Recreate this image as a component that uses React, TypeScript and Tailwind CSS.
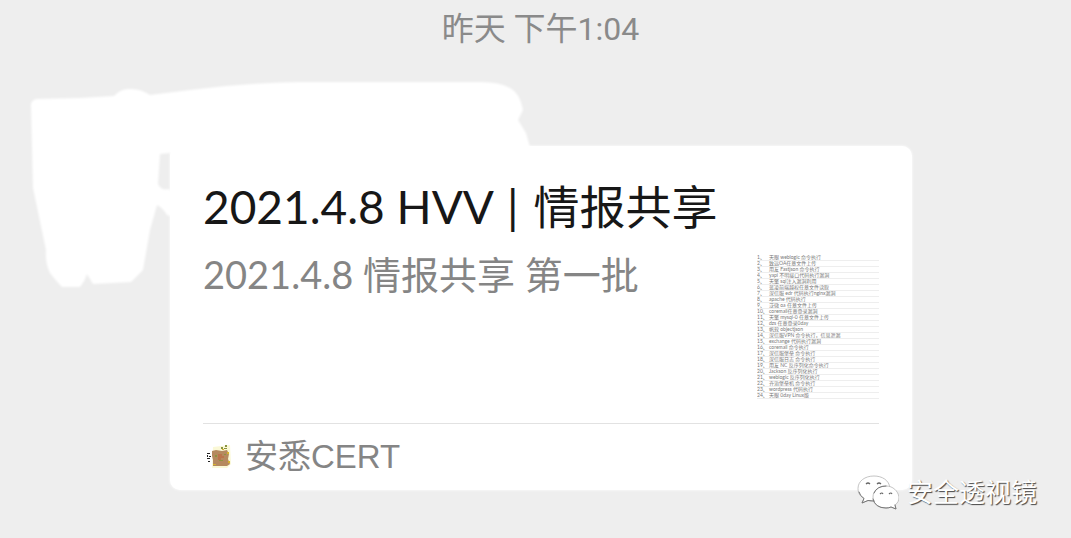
const rows: string[] = [
  "天眼 weblogic 命令执行",
  "致远OA任意文件上传",
  "用友 Fastjson 命令执行",
  "yapi 不明接口代码执行漏洞",
  "天擎 sql注入漏洞利用",
  "蓝凌前端越权任意文件读取",
  "深信服 edr 代码执行nginx漏洞",
  "apache 代码执行",
  "泛微 oa 任意文件上传",
  "coremail任意登录漏洞",
  "天擎 mysql-0 任意文件上传",
  "dzs 任意登录0day",
  "帆软 objectjson",
  "深信服VPN 命令执行，信息泄漏",
  "exchange 代码执行漏洞",
  "coremail 命令执行",
  "深信服堡垒 命令执行",
  "深信服日志 命令执行",
  "用友 NC 反序列化命令执行",
  "Jackson 反序列化执行",
  "weblogic 反序列化执行",
  "齐治堡垒机 命令执行",
  "wordpress 代码执行",
  "天眼 0day Linux版",
];

function Scribble() {
  return (
    <svg
      aria-hidden="true"
      viewBox="0 0 560 230"
      className="pointer-events-none absolute top-[70px] left-0 h-[230px] w-[560px] blur-[1px]"
    >
      <path
        fill="#fff"
        d="M36 29Q30 31 31 37L33 118L46 180Q45 193 50 203Q57 212 62 217L80 217Q85 211 87 204L93 214L131 212L143 200L150 160L157 135Q163 138 167 145L176 148L176 122L168 119Q161 121 158 114L160 84L170 83L180 95L555 95L555 78L530 77L526 63L518 50L523 40Q520 23 510 18Q500 12 480 12L300 12Q245 13 190 20L150 25Q140 18 128 19Q119 20 114 26L80 28Z"
      />
    </svg>
  );
}

function Avatar() {
  return (
    <svg aria-hidden="true" viewBox="0 0 26 26" className="size-[26px]">
      <path fill="#faf8d6" d="M6 3L23 1L24 20L20 24L5 24Z" />
      <path fill="#b5895f" d="M5 7L9 6L15 7L20 6L22 10L21 15L23 20L20 22L6 22L6 16L5 12Z" />
      <path fill="#c0653d" d="M11 10h4v2h2v2h-3v2h-3z" opacity=".6" />
      <path fill="#8c9440" d="M8 11h2v2h-2zM17 10h2v1h-2zM12 16h4v1h-4zM14 3h2v2h-2zM18 1h2v2h-2zM17 4h3v1h-3z" />
      <path fill="#d6b32d" d="M20 8h2v2h-2zM21 17h2v2h-2zM6 20h3v1H6zM15 5h2v1h-2z" />
      <path fill="#222" d="M0 9h3v1H0zM0 11h1v2H0zM2 12h2v1H2zM0 14h3v1H0zM1 17h2v1H1z" />
    </svg>
  );
}

function WeChatLogo() {
  return (
    <svg aria-hidden="true" viewBox="0 0 42 36" className="h-9 w-[42px]">
      <g fill="#fff" stroke="#b5b5b5" strokeWidth="0.8" strokeLinejoin="round">
        <path d="M17 2C8 2 1 7 1 14.500C1 19 3 22 7 24.500L5 29L11 26.500Q14 27.500 18 27C27 26 33 20 33 14C32 6 25 2 17 2Z" />
        <path d="M29 12C21 12 16 17 16 23C16 30 22 34 29 34Q32 34 34 33L39 35L38 31C41 29 42 26 42 23C41 17 36 12 29 12Z" />
      </g>
      <path
        fill="none"
        stroke="#777"
        strokeWidth="1"
        strokeLinecap="round"
        d="M2 18Q3 22 7 24.500L5 29L11 26.500L17 27M17 19Q20 12 29 12M16 25Q18 34 29 34Q32 34 34 33L39 35L38 31"
      />
      <path
        fill="none"
        stroke="#666"
        strokeWidth="1.200"
        d="M9 10q2-2 4 0M20 10q2-2 4 0M23 20q2-2 3 0M32 20q2-2 3 0"
      />
    </svg>
  );
}

export default function App() {
  return (
    <main className="relative min-h-screen bg-[#eeeeee] pb-12 font-['Lato','Noto_Sans_CJK_SC',sans-serif]">
      <time className="block pt-[9px] pl-[10px] text-center font-['Roboto','Noto_Sans_CJK_SC',sans-serif] text-[32px] leading-10 font-normal text-[#8a8a8a]">
        昨天 下午1:04
      </time>
      <Scribble />
      <article className="relative mt-[97px] mr-[159px] ml-[170px] rounded-[10px] bg-white px-[33px] pt-8 shadow-[0_0_3px_#ffffff]">
        <h1 className="text-[46px] leading-[58px] font-normal text-[#171717]">
          2021.4.8 HVV <span className="mx-[3px]">|</span> 情报共享
        </h1>
        <div className="flex justify-between pb-6">
          <p className="pt-3 text-[38px] leading-[52px] font-normal text-[#858585]">2021.4.8 情报共享 第一批</p>
          <ol className="mt-[19px] flex w-[122px] shrink-0 flex-col text-[5px] leading-[5px] text-[#777777]">
            {rows.map((row, i) => (
              <li key={row} className="flex gap-1 overflow-hidden whitespace-nowrap border-b border-[#eeeeee]">
                <span className="w-2 shrink-0">{i + 1}、</span>
                <span>{row}</span>
              </li>
            ))}
          </ol>
        </div>
        <footer className="flex items-center gap-3 border-t border-[#e2e2e2] py-3 pl-1">
          <Avatar />
          <span className="font-['Liberation_Sans','Noto_Sans_CJK_SC',sans-serif] text-[33px] leading-[42px] text-[#858585]">
            安悉CERT
          </span>
        </footer>
      </article>
      <div className="absolute right-[34px] bottom-[28px] flex items-center gap-2">
        <WeChatLogo />
        <span className="text-[26px] leading-9 text-white [text-shadow:1px_1px_1px_#444444]">安全透视镜</span>
      </div>
    </main>
  );
}
